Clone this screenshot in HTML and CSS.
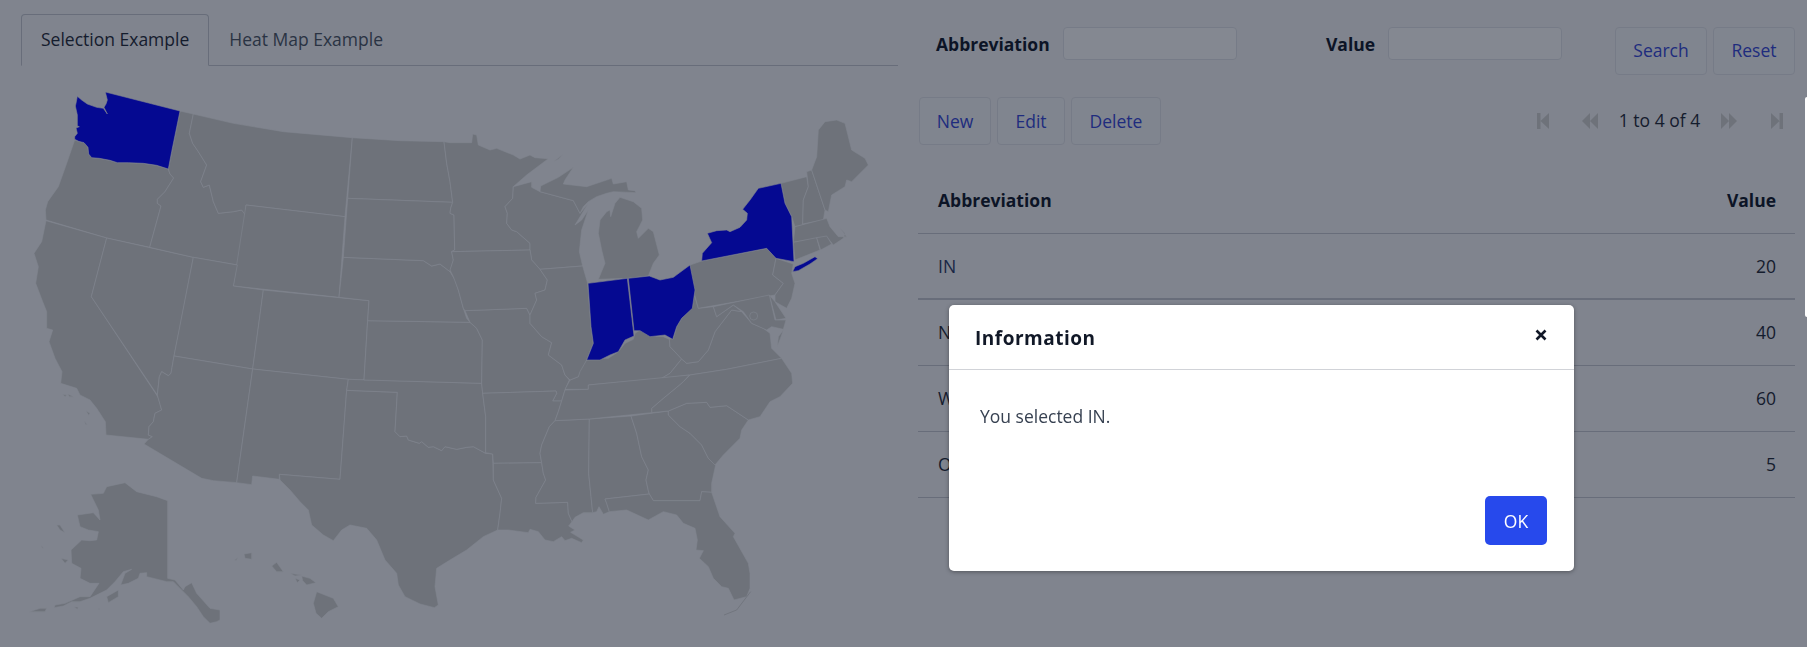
FILE: index.html
```html
<!DOCTYPE html>
<html lang="en">
<head>
<meta charset="utf-8">
<title>Map Example</title>
<link rel="stylesheet" href="styles.css">
</head>
<body>
<div class="page">
  <section class="left">
    <nav class="tabs">
      <a class="tab active">Selection Example</a>
      <a class="tab">Heat Map Example</a>
    </nav>
    <svg class="map" viewBox="0 195 2700 1746" width="900" height="582" aria-label="US map">
      <g class="state">
        <polygon points="224,420 236,424 252,428 264,442 266,462 275,473 298,475 330,481 352,488 385,488 430,490 470,496 505,507 510,522 521,534 495,575 472,598 472,610 483,618 449,742 320,714 138,660 136,630 143,605 175,560 200,490"/>
        <polygon points="138,662 320,714 274,890 470,1185 475,1195 485,1230 465,1240 460,1265 447,1280 445,1305 457,1310 445,1318 318,1305 316,1265 290,1225 270,1200 240,1185 230,1165 182,1150 186,1115 165,1075 147,1025 158,990 140,985 140,935 128,905 107,850 115,800 102,760 125,725"/>
        <polygon points="320,714 580,772 538,990 522,1068 513,1120 505,1127 485,1115 478,1130 472,1185 274,890"/>
        <polygon points="540,333 580,342 568,400 578,430 595,455 620,495 602,545 610,562 628,555 640,605 655,640 700,635 725,630 738,645 712,795 580,772 449,742 483,618 472,610 472,598 495,575 521,534 510,522 505,507"/>
        <polygon points="580,342 700,370 850,395 1057,413 1035,650 738,615 736,645 725,630 700,635 655,640 640,605 628,555 610,562 602,545 620,495 595,455 578,430 568,400"/>
        <polygon points="738,615 1035,650 1017,892 700,858"/>
        <polygon points="580,772 712,795 700,858 790,870 758,1107 522,1068"/>
        <polygon points="790,870 1107,902 1103,960 1092,1140 1045,1138 758,1107"/>
        <polygon points="522,1068 758,1107 710,1448 640,1442 605,1435 432,1332 445,1318 457,1310 445,1305 447,1280 460,1265 465,1240 485,1230 472,1185 478,1130 485,1115 505,1127 513,1120"/>
        <polygon points="758,1107 1045,1138 1040,1171 1020,1438 838,1423 838,1438 758,1428 755,1454 710,1448"/>
        <polygon points="1040,1171 1192,1177 1185,1295 1200,1310 1220,1308 1225,1320 1258,1330 1265,1325 1285,1342 1300,1340 1325,1352 1335,1340 1370,1348 1400,1342 1420,1340 1457,1360 1478,1362 1480,1440 1505,1495 1500,1540 1493,1590 1450,1610 1400,1650 1350,1680 1310,1705 1305,1760 1315,1815 1303,1823 1260,1812 1215,1790 1195,1755 1190,1720 1155,1680 1130,1620 1100,1585 1050,1575 1025,1590 1000,1622 970,1605 935,1575 925,1530 900,1505 870,1470 840,1440 838,1423 1020,1438"/>
        <polygon points="1045,1138 1445,1150 1448,1180 1457,1250 1457,1360 1420,1340 1400,1342 1370,1348 1335,1340 1325,1352 1300,1340 1285,1342 1265,1325 1258,1330 1225,1320 1220,1308 1200,1310 1185,1295 1192,1177 1040,1171"/>
        <polygon points="1103,962 1350,966 1410,967 1430,985 1447,1020 1445,1150 1092,1140"/>
        <polygon points="1030,772 1270,782 1295,798 1320,792 1350,815 1365,840 1375,870 1390,925 1400,955 1410,967 1103,962 1107,902 1017,892"/>
        <polygon points="1057,413 1200,422 1332,425 1340,490 1350,545 1358,607 1043,595"/>
        <polygon points="1043,595 1358,607 1352,625 1350,640 1362,645 1364,750 1355,755 1360,780 1350,815 1320,792 1295,798 1270,782 1030,772"/>
        <polygon points="1350,428 1415,428 1418,402 1430,405 1435,435 1470,450 1490,445 1540,465 1560,477 1590,465 1605,473 1645,476 1580,525 1540,560 1538,595 1515,620 1522,640 1520,670 1535,690 1550,695 1590,730 1590,750 1355,755 1364,750 1362,645 1350,640 1352,625 1358,607 1350,545 1340,490 1332,425"/>
        <polygon points="1395,932 1580,925 1590,945 1590,970 1625,1010 1655,1028 1645,1065 1685,1095 1695,1125 1708,1140 1695,1170 1685,1203 1658,1203 1670,1180 1668,1173 1448,1180 1445,1150 1447,1020 1430,985 1410,967"/>
        <polygon points="1448,1180 1668,1173 1670,1180 1658,1203 1685,1203 1675,1235 1665,1262 1648,1280 1625,1335 1620,1360 1625,1388 1480,1390 1478,1362 1457,1358 1457,1250"/>
        <polygon points="1480,1390 1625,1388 1630,1420 1637,1440 1608,1492 1607,1510 1703,1507 1705,1540 1716,1565 1706,1578 1725,1590 1712,1597 1750,1620 1745,1628 1715,1615 1695,1622 1685,1610 1660,1625 1635,1620 1615,1595 1590,1588 1585,1598 1525,1590 1493,1590 1500,1540 1505,1495 1480,1440"/>
        <polygon points="1665,1262 1768,1257 1766,1420 1778,1538 1750,1538 1725,1552 1716,1565 1705,1540 1703,1507 1607,1510 1608,1492 1637,1440 1630,1420 1625,1388 1620,1360 1625,1335 1648,1280"/>
        <polygon points="1768,1257 1893,1248 1910,1300 1925,1370 1945,1410 1938,1440 1945,1472 1948,1482 1815,1497 1820,1510 1828,1535 1810,1543 1797,1520 1790,1535 1778,1538 1766,1420"/>
        <polygon points="1893,1248 2005,1233 2005,1245 2040,1280 2070,1300 2105,1335 2125,1375 2147,1395 2135,1450 2135,1477 2105,1475 2100,1502 1960,1502 1948,1482 1945,1472 1938,1440 1945,1410 1925,1370 1910,1300"/>
        <polygon points="1815,1497 1948,1482 1960,1502 2100,1502 2105,1475 2135,1477 2160,1550 2205,1600 2200,1610 2245,1690 2250,1720 2250,1765 2240,1790 2202,1800 2185,1765 2165,1760 2140,1735 2125,1700 2098,1675 2110,1652 2088,1650 2092,1620 2085,1585 2050,1570 2030,1545 1990,1535 1945,1560 1880,1530 1828,1535 1820,1510"/>
        <polygon points="1695,1168 1765,1168 1765,1155 1985,1135 2010,1120 2045,1077 2010,1040 2008,1018 1990,1010 1950,1008 1920,990 1905,1000 1900,1018 1875,1030 1855,1055 1825,1075 1800,1075 1760,1080 1740,1105 1735,1130 1710,1140"/>
        <polygon points="1985,1135 2010,1120 2045,1077 2060,1090 2095,1085 2125,1050 2145,995 2195,930 2225,935 2255,970 2290,985 2310,1000 2315,1045 2345,1075 2180,1108 2070,1125"/>
        <polygon points="2008,1018 2010,1040 2045,1077 2060,1090 2095,1085 2125,1050 2145,995 2195,930 2225,935 2200,915 2150,950 2140,920 2095,925 2080,875 2075,920 2045,955 2030,980 2020,1015"/>
      </g>
      <g class="state" transform="translate(1350 990)">
        <polygon points="655,243 710,220 770,217 780,232 830,227 895,270 875,300 870,325 820,375 795,405 775,385 755,345 720,310 690,290 655,255"/>
        <polygon points="720,135 830,118 995,85 1025,130 1028,160 990,200 960,215 930,260 895,270 830,227 780,232 770,217 710,220 655,243 605,248 605,235 640,205 680,172 700,155"/>
        <polygon points="315,272 418,267 605,248 605,235 640,205 680,172 700,155 718,135 415,165 415,178 345,180 335,213 325,245"/>
        <path class="thin" d="M822 855 L860 840 L902 785"/>
      </g>
      <g class="state" transform="translate(1350 180)">
        <polygon points="190,380 245,365 245,382 270,395 370,422 385,450 390,460 415,430 375,495 395,480 415,450 395,510 388,575 398,618 270,628 245,600 240,570 240,550 200,515 185,510 170,490 172,460 165,440 188,415"/>
        <polygon points="270,395 272,378 325,352 370,322 345,360 340,372 410,380 485,355 490,372 530,365 535,390 555,392 558,398 490,395 470,400 440,410 415,425 400,440 390,460 370,422"/>
        <polygon points="445,658 465,610 455,570 445,520 450,480 470,455 480,450 482,470 495,430 510,412 550,425 575,445 578,480 560,515 565,535 595,505 610,515 628,585 610,610 595,648 535,655"/>
        <polygon points="310,305 340,282 325,298"/>
        <polygon points="5,575 240,570 245,600 270,628 292,660 285,690 255,700 260,720 240,765 230,745 45,752 40,745 25,690 10,650 0,630 10,600"/>
        <polygon points="270,628 398,618 413,670 423,800 430,850 410,900 390,935 385,950 360,960 345,945 335,915 295,885 305,848 275,830 240,790 240,765 260,720 255,700 285,690 292,660"/>
        <polygon points="720,615 755,603 950,565 978,595 968,645 1000,670 975,705 745,745 730,690"/>
        <polygon points="978,595 1030,612 1025,640 1035,670 1025,715 1010,745 975,725 975,705 1000,670 968,645"/>
        <polygon points="958,705 975,725 1008,775 978,780"/>
        <polygon points="790,740 958,705 975,780 1008,780 1000,808 965,800 950,810 905,790 880,755 850,735 800,770"/>
        <polygon points="1000,810 985,830 982,860 995,825"/>
        <circle cx="911" cy="768" r="12"/>
        <polygon points="993,370 1070,350 1075,380 1060,420 1058,495 1035,500 1025,470 1005,430"/>
        <polygon points="1070,335 1085,330 1125,450 1120,480 1058,492 1060,420 1075,380"/>
        <polygon points="1085,330 1100,290 1105,210 1125,185 1160,180 1185,190 1205,270 1245,295 1255,315 1205,365 1190,360 1185,380 1145,405 1135,455 1125,450"/>
        <polygon points="1035,500 1120,478 1130,475 1140,500 1165,530 1190,530 1170,505 1185,520 1180,535 1150,555 1130,530 1030,547"/>
        <polygon points="1030,547 1100,533 1110,570 1035,600"/>
        <polygon points="1100,533 1130,528 1145,552 1112,570"/>
      </g>
      <g class="state" transform="translate(0 990)">
        <polygon points="272,493 310,490 320,470 375,458 410,485 470,500 503,512 503,745 525,750 550,780 555,770 575,758 590,790 630,835 660,840 660,870 650,875 630,880 610,860 590,830 565,800 520,755 500,755 440,740 440,728 420,730 415,745 385,760 362,765 375,730 395,718 370,725 345,755 320,780 270,805 240,815 215,815 190,828 162,833 165,825 195,820 240,800 270,800 297,760 270,760 240,745 243,715 215,700 213,660 245,630 270,632 290,630 295,605 265,600 240,590 232,555 280,548 300,570 295,540"/>
        <polygon points="320,800 355,780 355,800 325,818"/>
        <polygon points="183,685 205,690 195,700"/>
        <polygon points="170,585 180,585 195,608 180,600"/>
        <polygon points="88,845 120,835 140,835 135,845 100,845"/>
        <polygon points="222,830 235,832 232,838"/>
        <polygon points="124,645 130,655 126,654"/>
        <polygon points="296,835 300,838 297,839"/>
        <polygon points="950,785 1000,805 1015,830 985,845 965,865 948,850 940,820"/>
        <polygon points="905,738 930,745 948,758 920,765 908,752"/>
        <polygon points="870,730 905,735 885,738"/>
        <polygon points="885,745 900,750 892,758"/>
        <polygon points="815,708 830,697 850,725 830,725"/>
        <polygon points="732,672 755,668 755,688 735,685"/>
        <polygon points="704,690 714,682 708,692"/>
        <polygon points="188,193 200,195 195,200"/>
        <polygon points="203,192 222,200 208,200"/>
        <polygon points="258,242 270,250 266,256"/>
        <polygon points="253,272 262,285 256,283"/>
      </g>
      <g class="state selected">
        <polygon points="232,289 228,310 226,318 232,345 232,378 238,380 228,384 232,400 224,410 224,418 236,424 252,428 264,442 266,462 275,473 298,475 330,481 352,488 385,488 430,490 470,496 505,507 515,455 540,333 316,276 322,300 318,312 312,322 322,342 310,325 290,322 262,312 245,300"/>
      </g>
      <g class="state selected" transform="translate(1350 180)">
        <polygon points="993,370 1005,430 1025,470 1032,605 978,595 950,565 755,603 757,580 785,548 772,520 800,512 830,510 840,515 870,502 890,480 892,460 878,448 900,420 925,385"/>
        <polygon points="1028,635 1035,620 1060,610 1095,590 1103,596 1080,612 1045,632"/>
        <polygon points="414,670 532,655 552,828 525,840 505,875 480,885 450,900 410,900 430,850 423,800"/>
        <polygon points="535,655 598,648 630,660 670,652 720,615 735,690 727,745 695,775 680,800 668,838 645,825 600,830 570,812 552,812"/>
      </g>
    </svg>
  </section>

  <section class="right">
    <form class="search">
      <label class="field-label label-abbr">Abbreviation</label>
      <input class="field" type="text">
      <label class="field-label label-value">Value</label>
      <input class="field" type="text">
      <div class="search-actions">
        <button type="button" class="btn btn-search">Search</button>
        <button type="button" class="btn btn-reset">Reset</button>
      </div>
    </form>

    <div class="toolbar">
      <button type="button" class="btn btn-new">New</button>
      <button type="button" class="btn btn-edit">Edit</button>
      <button type="button" class="btn btn-delete">Delete</button>
      <div class="pager">
        <svg class="pg" viewBox="0 0 12 16" width="12" height="16"><path d="M0 0h3.500v16H0zM12 0v16L3.500 8z"/></svg>
        <svg class="pg pg-prev" viewBox="0 0 16 16" width="16" height="16"><path d="M8 0v16L0 8zM16 0v16L8 8z"/></svg>
        <span class="pg-text">1 to 4 of 4</span>
        <svg class="pg pg-next" viewBox="0 0 16 16" width="16" height="16"><path d="M0 0v16l8-8zM8 0v16l8-8z"/></svg>
        <svg class="pg pg-last" viewBox="0 0 12 16" width="12" height="16"><path d="M0 0v16L8.500 8zM8.500 0H12v16H8.500z"/></svg>
      </div>
    </div>

    <table class="grid">
      <thead>
        <tr><th>Abbreviation</th><th class="num">Value</th></tr>
      </thead>
      <tbody>
        <tr class="row-selected"><td class="link">IN</td><td class="num">20</td></tr>
        <tr><td>NY</td><td class="num">40</td></tr>
        <tr><td>WA</td><td class="num">60</td></tr>
        <tr><td>OH</td><td class="num">5</td></tr>
      </tbody>
    </table>
  </section>
</div>

<div class="side-tab"></div>

<div class="backdrop"></div>

<div class="modal" role="dialog">
  <header class="modal-head">
    <h2 class="modal-title">Information</h2>
    <svg class="modal-close" viewBox="0 0 12 12" width="12" height="12"><path d="M1.500 1.500l9 9M10.500 1.500l-9 9"/></svg>
  </header>
  <div class="modal-body">You selected IN.</div>
  <footer class="modal-foot">
    <button type="button" class="btn-ok">OK</button>
  </footer>
</div>
</body>
</html>
```
FILE: styles.css
```css
* { box-sizing: border-box; }
html, body { margin: 0; height: 647px; overflow: hidden; }
body {
  background: #f6f6f8;
  color: #1f2937;
  font-family: "Open Sans", "Noto Sans", sans-serif;
  font-size: 17.500px;
}
.page {
  display: grid;
  grid-template-columns: 900px 1fr;
  height: 647px;
}

/* left: tabs + map */
.tabs {
  display: flex;
  height: 52px;
  margin: 14px 2px 0 21px;
  border-bottom: 1px solid #c6c9d0;
}
.tab {
  display: flex;
  align-items: center;
  height: 52px;
  padding: 0 19px 2px;
  color: #4b5563;
  border: 1px solid transparent;
  border-radius: 4px 4px 0 0;
}
.tab.active {
  color: #1f2937;
  border-color: #c6c9d0;
  border-bottom-color: #f6f6f8;
}
.map { display: block; margin-top: -1px; }
.state polygon, .state circle {
  fill: #d2d3d1;
  stroke: #f6f6f8;
  stroke-width: 1.800;
  stroke-linejoin: round;
}
.state .thin { fill: none; stroke: #d2d3d1; stroke-width: 2.500; }
.state.selected polygon { fill: #0000ff; }

/* right: search + toolbar + table */
.search {
  display: flex;
  align-items: flex-start;
  padding: 27px 12px 0 36px;
}
.field-label {
  font-weight: 700;
  line-height: 34px;
  color: #0f1729;
}
.label-abbr { width: 127px; }
.label-value { width: 62px; margin-left: 89px; }
.field {
  width: 174px;
  height: 33px;
  background: #fff;
  border: 1px solid #e3e5ea;
  border-radius: 4px;
}
.search-actions {
  display: flex;
  gap: 6px;
  margin-left: auto;
}
.btn {
  height: 48px;
  padding: 0;
  font: inherit;
  color: #3547d8;
  background: #f7f8fa;
  border: 1px solid #e3e5ea;
  border-radius: 4px;
}
.btn-search { width: 92px; padding-bottom: 2px; }
.btn-reset { width: 82px; padding-bottom: 2px; }
.btn-new { width: 72px; }
.btn-edit { width: 68px; }
.btn-delete { width: 90px; }

.toolbar {
  display: flex;
  align-items: center;
  gap: 6px;
  margin-top: 22px;
  padding: 0 24px 0 19px;
}
.pager {
  display: flex;
  align-items: center;
  margin-left: auto;
}
.pg { fill: #d2d3d1; }
.pg-prev { margin-left: 33px; }
.pg-text { width: 123px; padding-bottom: 2px; text-align: center; color: #1f2937; }
.pg-next { margin-right: 34px; }

.grid {
  width: 877px;
  margin: 22px 0 0 18px;
  border-collapse: collapse;
}
.grid th, .grid td {
  height: 66px;
  padding: 0 19px 0 20px;
  text-align: left;
  border-bottom: 1px solid #c6c9d0;
}
.grid th { font-weight: 700; color: #0f1729; }
.grid .num { text-align: right; }
.grid .link { color: #2a3a66; }
.row-selected td { border-bottom-width: 2px; }

/* overlays */
.side-tab {
  position: fixed;
  top: 97px;
  right: 0;
  width: 2px;
  height: 220px;
  background: #fff;
  border-radius: 4px 0 0 4px;
  z-index: 20;
}
.backdrop {
  position: fixed;
  inset: 0;
  background: rgba(10, 17, 35, .5);
  z-index: 10;
}
.modal {
  position: fixed;
  top: 305px;
  left: 949px;
  width: 625px;
  height: 266px;
  display: flex;
  flex-direction: column;
  background: #fff;
  border-radius: 5px;
  box-shadow: 0 1px 4px rgba(0, 0, 0, .35);
  z-index: 30;
}
.modal-head {
  display: flex;
  align-items: flex-start;
  justify-content: space-between;
  height: 65px;
  padding: 19px 27px 0 26px;
  border-bottom: 1px solid #d1d3d8;
}
.modal-title {
  margin: 0;
  font-size: 19px;
  font-weight: 700;
  line-height: 28px;
  letter-spacing: .5px;
  color: #111827;
}
.modal-close {
  margin-top: 5px;
  fill: none;
  stroke: #111827;
  stroke-width: 2.600;
}
.modal-body {
  flex: 1;
  padding: 35px 31px 0;
  color: #374151;
  line-height: 22px;
}
.modal-foot {
  display: flex;
  justify-content: flex-end;
  padding: 0 27px 26px;
}
.btn-ok {
  width: 62px;
  height: 49px;
  padding: 0;
  font: inherit;
  color: #fff;
  background: #2749ec;
  border: 0;
  border-radius: 5px;
}
```
